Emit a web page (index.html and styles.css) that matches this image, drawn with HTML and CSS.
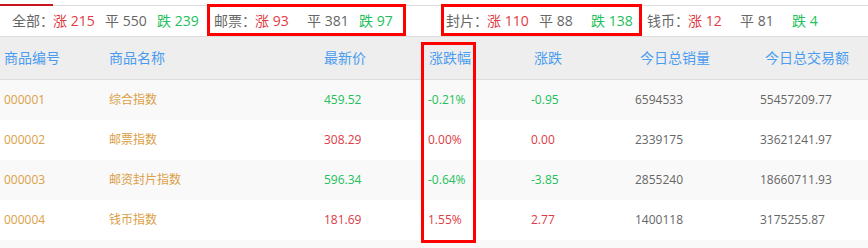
FILE: index.html
```html
<!DOCTYPE html>
<html lang="zh-CN">
<head>
<meta charset="utf-8">
<link rel="stylesheet" href="styles.css">
</head>
<body>
<div class="page">
  <div class="tabline"><div class="tab-active"></div></div>
  <div class="stats">
    <div class="group g1">
      <span class="label">全部：</span>
      <span class="item up">涨 215</span>
      <span class="item flat">平 550</span>
      <span class="item down">跌 239</span>
    </div>
    <div class="group g2">
      <span class="label">邮票：</span>
      <span class="item up">涨 93</span>
      <span class="item flat">平 381</span>
      <span class="item down">跌 97</span>
    </div>
    <div class="group g3">
      <span class="label">封片：</span>
      <span class="item up">涨 110</span>
      <span class="item flat">平 88</span>
      <span class="item down">跌 138</span>
    </div>
    <div class="group">
      <span class="label">钱币：</span>
      <span class="item up">涨 12</span>
      <span class="item flat">平 81</span>
      <span class="item down">跌 4</span>
    </div>
  </div>
  <div class="table">
    <div class="row head">
      <div class="cell">商品编号</div>
      <div class="cell">商品名称</div>
      <div class="cell">最新价</div>
      <div class="cell h4">涨跌幅</div>
      <div class="cell h5">涨跌</div>
      <div class="cell h6">今日总销量</div>
      <div class="cell h6">今日总交易额</div>
    </div>
    <div class="row odd">
      <div class="cell gold">000001</div>
      <div class="cell gold">综合指数</div>
      <div class="cell down">459.52</div>
      <div class="cell down">-0.21%</div>
      <div class="cell down">-0.95</div>
      <div class="cell flat">6594533</div>
      <div class="cell flat">55457209.77</div>
    </div>
    <div class="row">
      <div class="cell gold">000002</div>
      <div class="cell gold">邮票指数</div>
      <div class="cell up">308.29</div>
      <div class="cell up">0.00%</div>
      <div class="cell up">0.00</div>
      <div class="cell flat">2339175</div>
      <div class="cell flat">33621241.97</div>
    </div>
    <div class="row odd">
      <div class="cell gold">000003</div>
      <div class="cell gold">邮资封片指数</div>
      <div class="cell down">596.34</div>
      <div class="cell down">-0.64%</div>
      <div class="cell down">-3.85</div>
      <div class="cell flat">2855240</div>
      <div class="cell flat">18660711.93</div>
    </div>
    <div class="row">
      <div class="cell gold">000004</div>
      <div class="cell gold">钱币指数</div>
      <div class="cell up">181.69</div>
      <div class="cell up">1.55%</div>
      <div class="cell up">2.77</div>
      <div class="cell flat">1400118</div>
      <div class="cell flat">3175255.87</div>
    </div>
    <div class="row odd"></div>
  </div>
  <div class="mark mark-stamp"></div>
  <div class="mark mark-cover"></div>
  <div class="mark mark-col"></div>
</div>
</body>
</html>
```

FILE: styles.css
```css
* { box-sizing: border-box; }
html, body { margin: 0; padding: 0; background: #fff; }
body {
  font-family: "Open Sans", "Noto Sans CJK SC", sans-serif;
  overflow: hidden;
  height: 248px;
}
.page { position: relative; width: 868px; height: 248px; overflow: hidden; }

.tabline {
  height: 6px;
  padding-top: 4px;
  border-bottom: 1px solid #dcdcdc;
}
.tab-active {
  width: 53px;
  height: 2px;
  background: #c9151e;
}

.stats {
  display: flex;
  align-items: center;
  height: 31px;
  padding-left: 12px;
  border-bottom: 1px solid #dcdcdc;
  font-size: 14px;
  line-height: 18px;
}
.group { display: flex; }
.label { width: 41px; color: #666; white-space: nowrap; }
.item { width: 52px; white-space: nowrap; }
.g1 { margin-right: 5px; }
.g2 { margin-right: 35px; }
.g3 { margin-right: 4px; }

.up { color: #de3a45; }
.down { color: #22c05a; }
.flat { color: #666; }
.gold { color: #dca046; }

.table { font-size: 12px; line-height: 16px; }
.row {
  display: grid;
  grid-template-columns: 105px 215px 104px 103px 104px 125px 1fr;
  padding-left: 4px;
  height: 40px;
  align-items: center;
}
.row.odd { background: #f9f9f9; }
.row.head {
  height: 43px;
  background: #eeeeee;
  border-bottom: 1px solid #dcdcdc;
  color: #4b9cee;
  font-size: 14px;
  line-height: 18px;
}
.cell { white-space: nowrap; }
.h4 { padding-left: 1px; }
.h5 { padding-left: 3px; }
.h6 { padding-left: 5px; }

.mark {
  position: absolute;
  border: 3px solid #ff0000;
}
.mark-stamp { left: 207px; top: 4px; width: 199px; height: 32px; }
.mark-cover { left: 441px; top: 4px; width: 201px; height: 32px; }
.mark-col { left: 421px; top: 42px; width: 55px; height: 201px; }
```
